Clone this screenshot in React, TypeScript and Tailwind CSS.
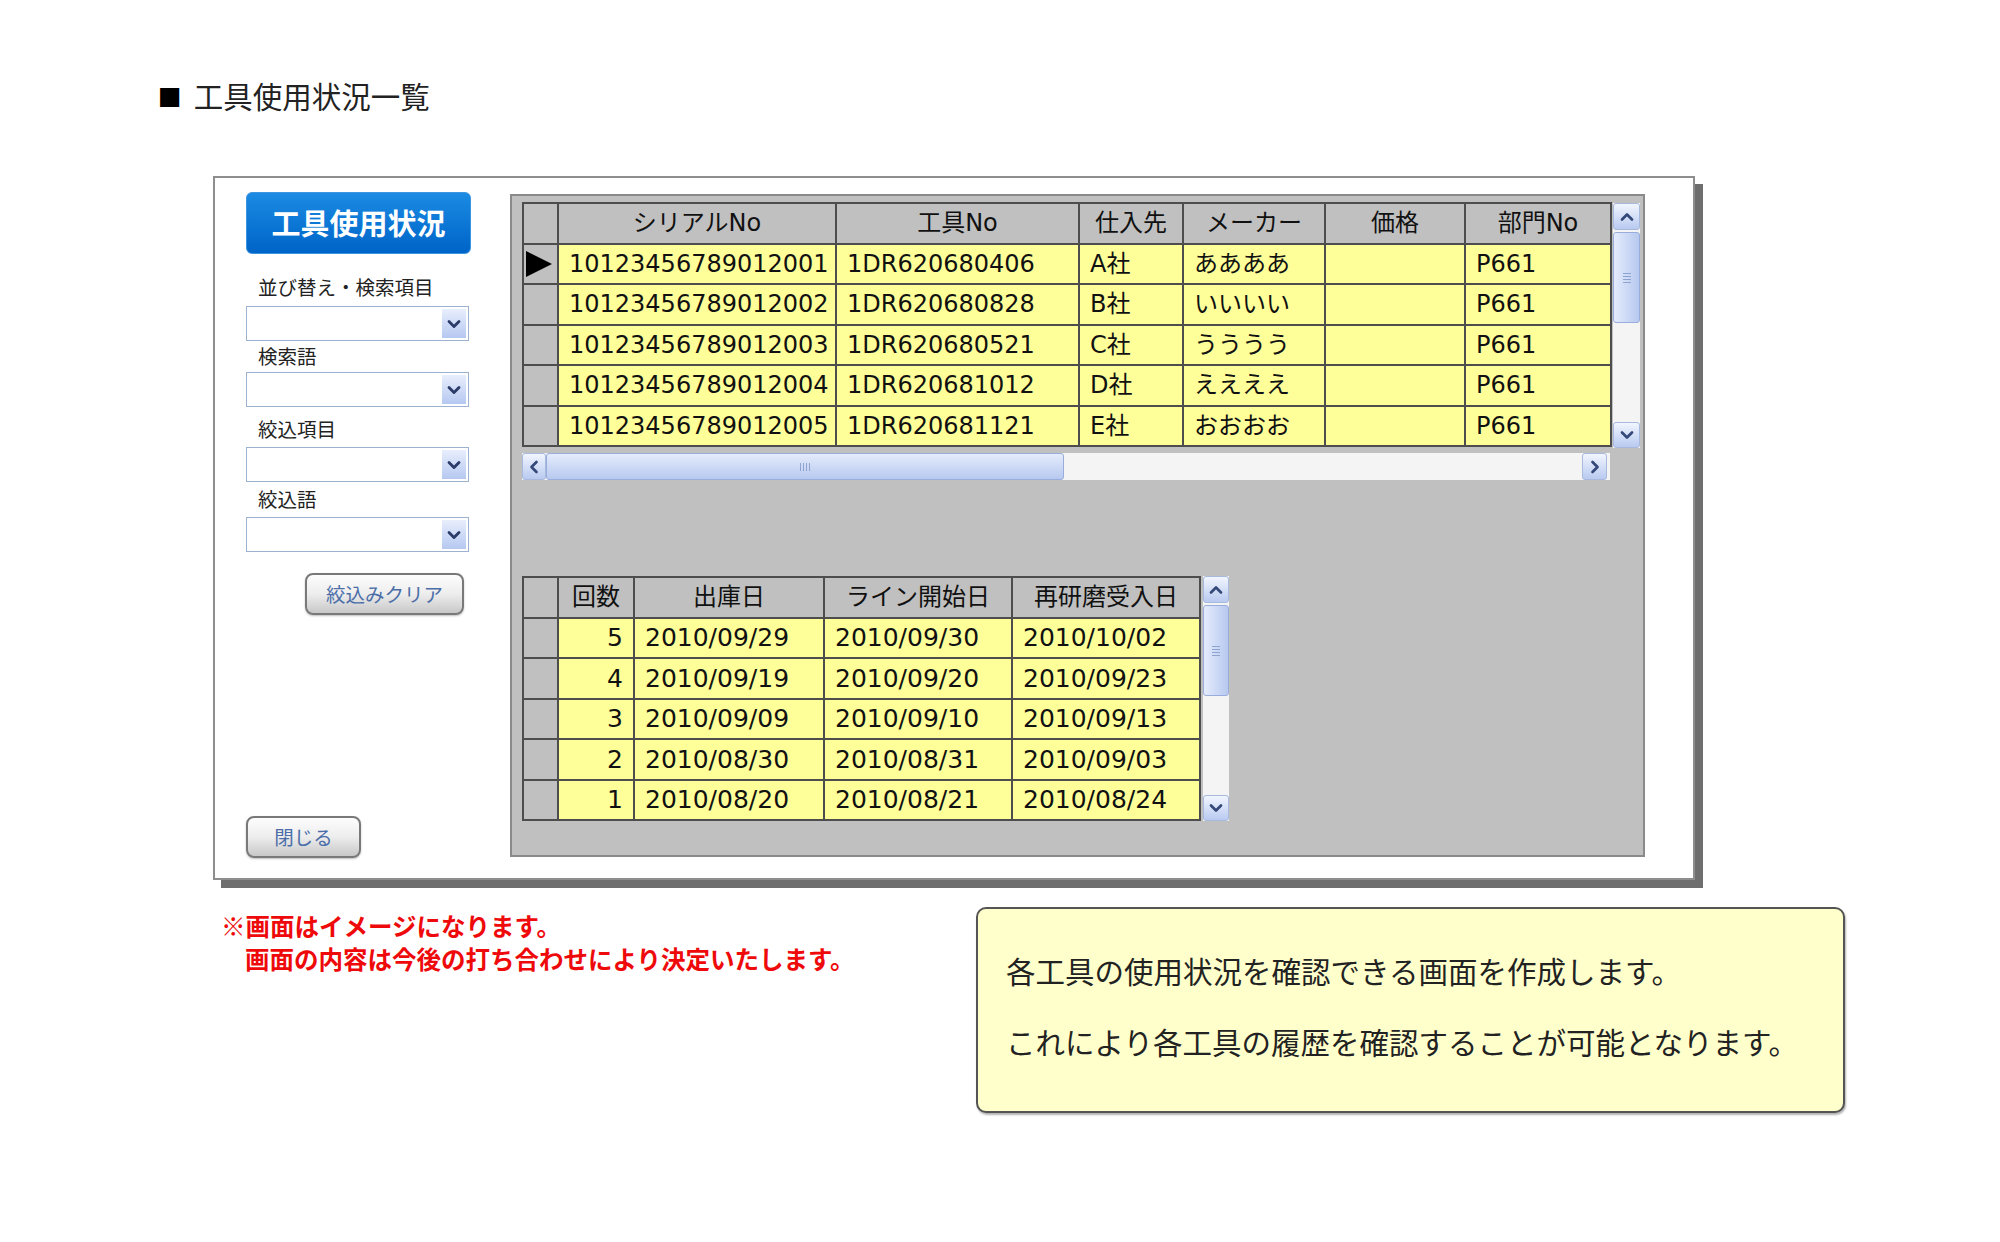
import { ChevronDown, ChevronUp, ChevronLeft, ChevronRight } from "lucide-react";

interface ToolRow {
  serial: string;
  toolNo: string;
  supplier: string;
  maker: string;
  price: string;
  dept: string;
}

interface HistoryRow {
  count: number;
  shipped: string;
  lineStart: string;
  regrind: string;
}

const tools: ToolRow[] = [
  { serial: "10123456789012001", toolNo: "1DR620680406", supplier: "A社", maker: "ああああ", price: "", dept: "P661" },
  { serial: "10123456789012002", toolNo: "1DR620680828", supplier: "B社", maker: "いいいい", price: "", dept: "P661" },
  { serial: "10123456789012003", toolNo: "1DR620680521", supplier: "C社", maker: "うううう", price: "", dept: "P661" },
  { serial: "10123456789012004", toolNo: "1DR620681012", supplier: "D社", maker: "ええええ", price: "", dept: "P661" },
  { serial: "10123456789012005", toolNo: "1DR620681121", supplier: "E社", maker: "おおおお", price: "", dept: "P661" },
];

const history: HistoryRow[] = [
  { count: 5, shipped: "2010/09/29", lineStart: "2010/09/30", regrind: "2010/10/02" },
  { count: 4, shipped: "2010/09/19", lineStart: "2010/09/20", regrind: "2010/09/23" },
  { count: 3, shipped: "2010/09/09", lineStart: "2010/09/10", regrind: "2010/09/13" },
  { count: 2, shipped: "2010/08/30", lineStart: "2010/08/31", regrind: "2010/09/03" },
  { count: 1, shipped: "2010/08/20", lineStart: "2010/08/21", regrind: "2010/08/24" },
];

const headCell = "bg-[#c0c0c0] flex items-center justify-center";
const dataCell = "bg-[#ffff99] flex items-center pl-[10px] whitespace-nowrap";

const ArrowBox = ({ children, className = "" }: { children: React.ReactNode; className?: string }) => (
  <div
    className={`flex items-center justify-center rounded-[3px] border border-[#a7b9dd] bg-linear-to-b from-[#f1f5fe] to-[#b9caf0] ${className}`}
  >
    {children}
  </div>
);

const VScroll = ({ className = "" }: { className?: string }) => (
  <div className={`flex flex-col h-[245px] bg-[#f4f4f4] ${className}`}>
    <ArrowBox className="h-[27px]">
      <ChevronUp size={20} strokeWidth={3.2} className="text-[#34497a]" />
    </ArrowBox>
    <div className="mt-[2px] h-[91px] rounded-[3px] border border-[#98addb] bg-linear-to-r from-[#e4ebfc] to-[#b8c9ef] flex flex-col items-center justify-center gap-[2px]">
      <div className="w-[8px] h-[1px] bg-[#8ea3cf]" />
      <div className="w-[8px] h-[1px] bg-[#8ea3cf]" />
      <div className="w-[8px] h-[1px] bg-[#8ea3cf]" />
      <div className="w-[8px] h-[1px] bg-[#8ea3cf]" />
    </div>
    <div className="flex-1" />
    <ArrowBox className="h-[26px]">
      <ChevronDown size={20} strokeWidth={3.2} className="text-[#34497a]" />
    </ArrowBox>
  </div>
);

const Select = ({ className = "" }: { className?: string }) => (
  <div className={`h-[35px] w-[223px] border border-[#9db2d1] bg-white flex justify-end p-[2px] ${className}`}>
    <div className="w-[24px] flex items-center justify-center bg-linear-to-b from-[#e8eefc] to-[#b6c8f1]">
      <ChevronDown size={20} strokeWidth={3.4} className="text-[#2c3c68]" />
    </div>
  </div>
);

const grayButton =
  "h-[42px] rounded-[8px] border-2 border-[#797979] bg-linear-to-b from-[#fdfdfd] via-[#ededed] to-[#c8c8c8] text-[19.5px] text-[#4b6ea8] shadow-[0_1px_2px_rgba(0,0,0,0.25)] flex items-center justify-center";

const App = () => {
  return (
    <div className="w-[2000px] h-[1242px] bg-white overflow-hidden font-['Noto_Sans_CJK_JP',sans-serif] text-[#222]">
      {/* Page title */}
      <div className="pt-[75px] pl-[158px] h-[115px] flex items-center">
        <div className="h-[40px] flex items-center">
          <span className="font-['DejaVu_Sans',sans-serif] text-[25px] leading-none text-black">■</span>
          <span className="ml-[12px] text-[29.5px] leading-[40px]">工具使用状況一覧</span>
        </div>
      </div>

      {/* Screen mock frame */}
      <div className="ml-[213px] mt-[61px] w-[1482px] h-[704px] border-2 border-[#8e8e8e] bg-white shadow-[8px_8px_0_0_#6e6e6e] flex">
        {/* Left controls */}
        <div className="ml-[31px] mt-[14px] mb-[20px] w-[225px] flex flex-col">
          <div className="h-[62px] rounded-[6px] border border-[#3d95e0] bg-linear-to-b from-[#1b8be3] to-[#0064c8] flex items-center justify-center text-white font-bold text-[29px]">
            工具使用状況
          </div>

          <div className="mt-[21px] h-[24px] leading-[24px] pl-[12px] text-[19.5px]">並び替え・検索項目</div>
          <Select className="mt-[7px]" />
          <div className="mt-[3px] h-[24px] leading-[24px] pl-[12px] text-[19.5px]">検索語</div>
          <Select className="mt-[4px]" />
          <div className="mt-[10px] h-[24px] leading-[24px] pl-[12px] text-[19.5px]">絞込項目</div>
          <Select className="mt-[6px]" />
          <div className="mt-[5px] h-[24px] leading-[24px] pl-[12px] text-[19.5px]">絞込語</div>
          <Select className="mt-[6px]" />

          <button className={`${grayButton} mt-[21px] ml-[59px] w-[159px]`}>絞込みクリア</button>

          <button className={`${grayButton} mt-auto w-[115px]`}>閉じる</button>
        </div>

        {/* Data panel */}
        <div className="ml-[39px] mt-[16px] w-[1135px] h-[663px] border-2 border-[#8a8a8a] bg-[#c0c0c0] pl-[10px] pt-[6px] flex flex-col font-['DejaVu_Sans','Noto_Sans_CJK_JP',sans-serif] text-[24px] text-[#111]">
          {/* Tool list */}
          <div className="flex items-start">
            <div className="grid grid-cols-[33px_276px_241px_102px_140px_138px_144px] auto-rows-[38.5px] gap-[2px] p-[2px] bg-[#4d4d4d]">
              <div className={headCell} />
              <div className={headCell}>シリアルNo</div>
              <div className={headCell}>工具No</div>
              <div className={headCell}>仕入先</div>
              <div className={headCell}>メーカー</div>
              <div className={headCell}>価格</div>
              <div className={headCell}>部門No</div>
              {tools.map((t, i) => (
                <div key={t.serial} className="contents">
                  <div className="bg-[#c0c0c0] flex items-center pl-[1px]">
                    {i === 0 && (
                      <svg width="28" height="26" viewBox="0 0 28 26">
                        <polygon points="1,0 27,13 1,26" fill="#000" />
                      </svg>
                    )}
                  </div>
                  <div className={dataCell}>{t.serial}</div>
                  <div className={dataCell}>{t.toolNo}</div>
                  <div className={dataCell}>{t.supplier}</div>
                  <div className={dataCell}>{t.maker}</div>
                  <div className={dataCell}>{t.price}</div>
                  <div className={dataCell}>{t.dept}</div>
                </div>
              ))}
            </div>
            <VScroll className="ml-[1px] mt-[1px] w-[27px]" />
          </div>

          {/* Horizontal scrollbar */}
          <div className="mt-[5px] w-[1088px] h-[27px] bg-[#f4f4f4] flex items-stretch">
            <ArrowBox className="w-[24px]">
              <ChevronLeft size={20} strokeWidth={3.2} className="text-[#34497a]" />
            </ArrowBox>
            <div className="w-[518px] rounded-[3px] border border-[#98addb] bg-linear-to-b from-[#e4ebfc] to-[#b8c9ef] flex items-center justify-center gap-[2px]">
              <div className="w-[1px] h-[8px] bg-[#8ea3cf]" />
              <div className="w-[1px] h-[8px] bg-[#8ea3cf]" />
              <div className="w-[1px] h-[8px] bg-[#8ea3cf]" />
              <div className="w-[1px] h-[8px] bg-[#8ea3cf]" />
            </div>
            <div className="flex-1" />
            <ArrowBox className="w-[25px] mr-[3px]">
              <ChevronRight size={20} strokeWidth={3.2} className="text-[#34497a]" />
            </ArrowBox>
          </div>

          {/* Usage history */}
          <div className="mt-[96px] flex items-start">
            <div className="grid grid-cols-[33px_74px_188px_186px_186px] auto-rows-[38.5px] gap-[2px] p-[2px] bg-[#4d4d4d] text-[24px]">
              <div className={headCell} />
              <div className={headCell}>回数</div>
              <div className={headCell}>出庫日</div>
              <div className={headCell}>ライン開始日</div>
              <div className={headCell}>再研磨受入日</div>
              {history.map((h) => (
                <div key={h.count} className="contents">
                  <div className="bg-[#c0c0c0]" />
                  <div className="bg-[#ffff99] flex items-center justify-end pr-[10px] text-[25px]">{h.count}</div>
                  <div className={`${dataCell} pl-[8px] text-[25px]`}>{h.shipped}</div>
                  <div className={`${dataCell} pl-[8px] text-[25px]`}>{h.lineStart}</div>
                  <div className={`${dataCell} pl-[8px] text-[25px]`}>{h.regrind}</div>
                </div>
              ))}
            </div>
            <VScroll className="ml-[2px] w-[26px]" />
          </div>
        </div>
      </div>

      {/* Notes */}
      <div className="mt-[27px] flex items-start">
        <div className="ml-[221px] mt-[2px] w-[755px] text-[24.5px] leading-[33px] font-bold text-[#ee0a0a]">
          <div>※画面はイメージになります。</div>
          <div className="pl-[24px]">画面の内容は今後の打ち合わせにより決定いたします。</div>
        </div>
        <div className="w-[869px] h-[206px] rounded-[10px] border-2 border-[#555] bg-[#ffffcc] shadow-[1px_2px_2px_rgba(0,0,0,0.3)] pl-[28px] pt-[41px] text-[29.5px] leading-[40px]">
          <div>各工具の使用状況を確認できる画面を作成します。</div>
          <div className="mt-[31px]">これにより各工具の履歴を確認することが可能となります。</div>
        </div>
      </div>
    </div>
  );
};

export default App;
